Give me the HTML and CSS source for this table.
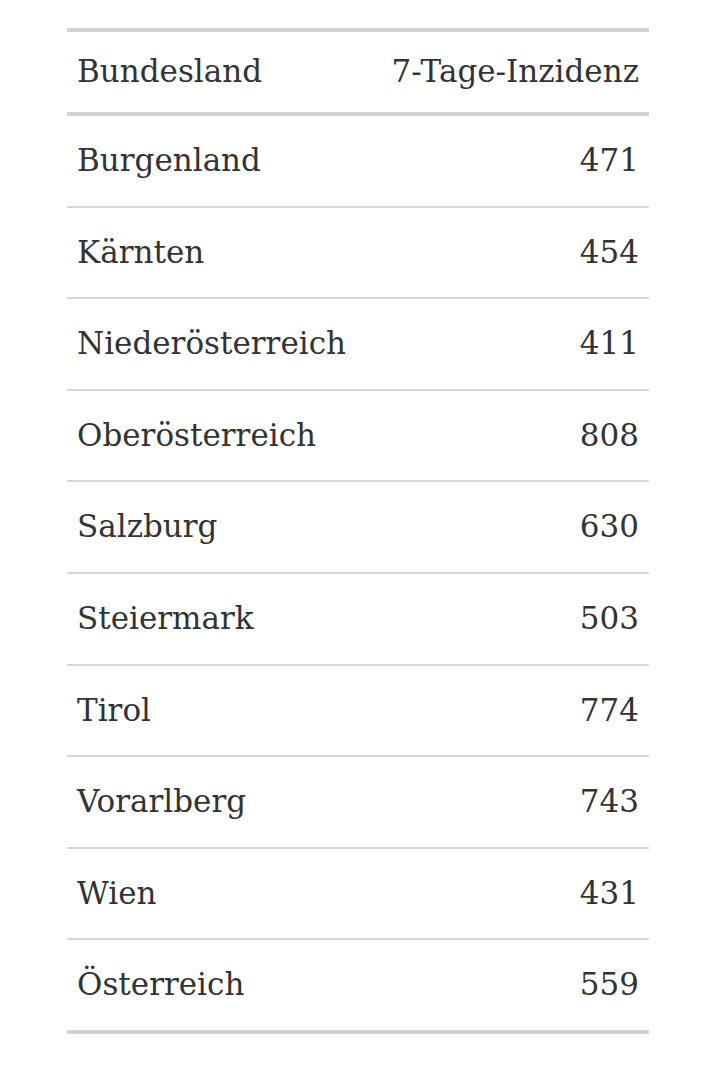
FILE: index.html
```html
<!DOCTYPE html>
<html lang="de">
<head>
<meta charset="utf-8">
<title>7-Tage-Inzidenz</title>
<link rel="stylesheet" href="styles.css">
</head>
<body>
<div class="table">
  <div class="row head"><span>Bundesland</span><span>7-Tage-Inzidenz</span></div>
  <div class="row"><span>Burgenland</span><span>471</span></div>
  <div class="row"><span>Kärnten</span><span>454</span></div>
  <div class="row"><span>Niederösterreich</span><span>411</span></div>
  <div class="row"><span>Oberösterreich</span><span>808</span></div>
  <div class="row"><span>Salzburg</span><span>630</span></div>
  <div class="row"><span>Steiermark</span><span>503</span></div>
  <div class="row"><span>Tirol</span><span>774</span></div>
  <div class="row"><span>Vorarlberg</span><span>743</span></div>
  <div class="row"><span>Wien</span><span>431</span></div>
  <div class="row last"><span>Österreich</span><span>559</span></div>
</div>
</body>
</html>
```
FILE: styles.css
```css
html, body {
  margin: 0;
  padding: 0;
  background: #ffffff;
}
body {
  padding: 28px 0 0 67px;
  font-family: "DejaVu Serif", "Liberation Serif", serif;
  color: #333333;
}
.table {
  width: 582px;
  border-top: 4px solid #d2d2d2;
  border-bottom: 4px solid #d2d2d2;
  display: flex;
  flex-direction: column;
}
.row {
  display: flex;
  justify-content: space-between;
  align-items: center;
  box-sizing: content-box;
  height: 88px;
  padding: 0 10px 1.6px;
  font-size: 31px;
  line-height: 40px;
  border-bottom: 2px solid #d6d6d6;
}
.row.head {
  height: 78px;
  padding-bottom: 2px;
  border-bottom: 4px solid #d2d2d2;
}
.row.last {
  border-bottom: none;
}
```
